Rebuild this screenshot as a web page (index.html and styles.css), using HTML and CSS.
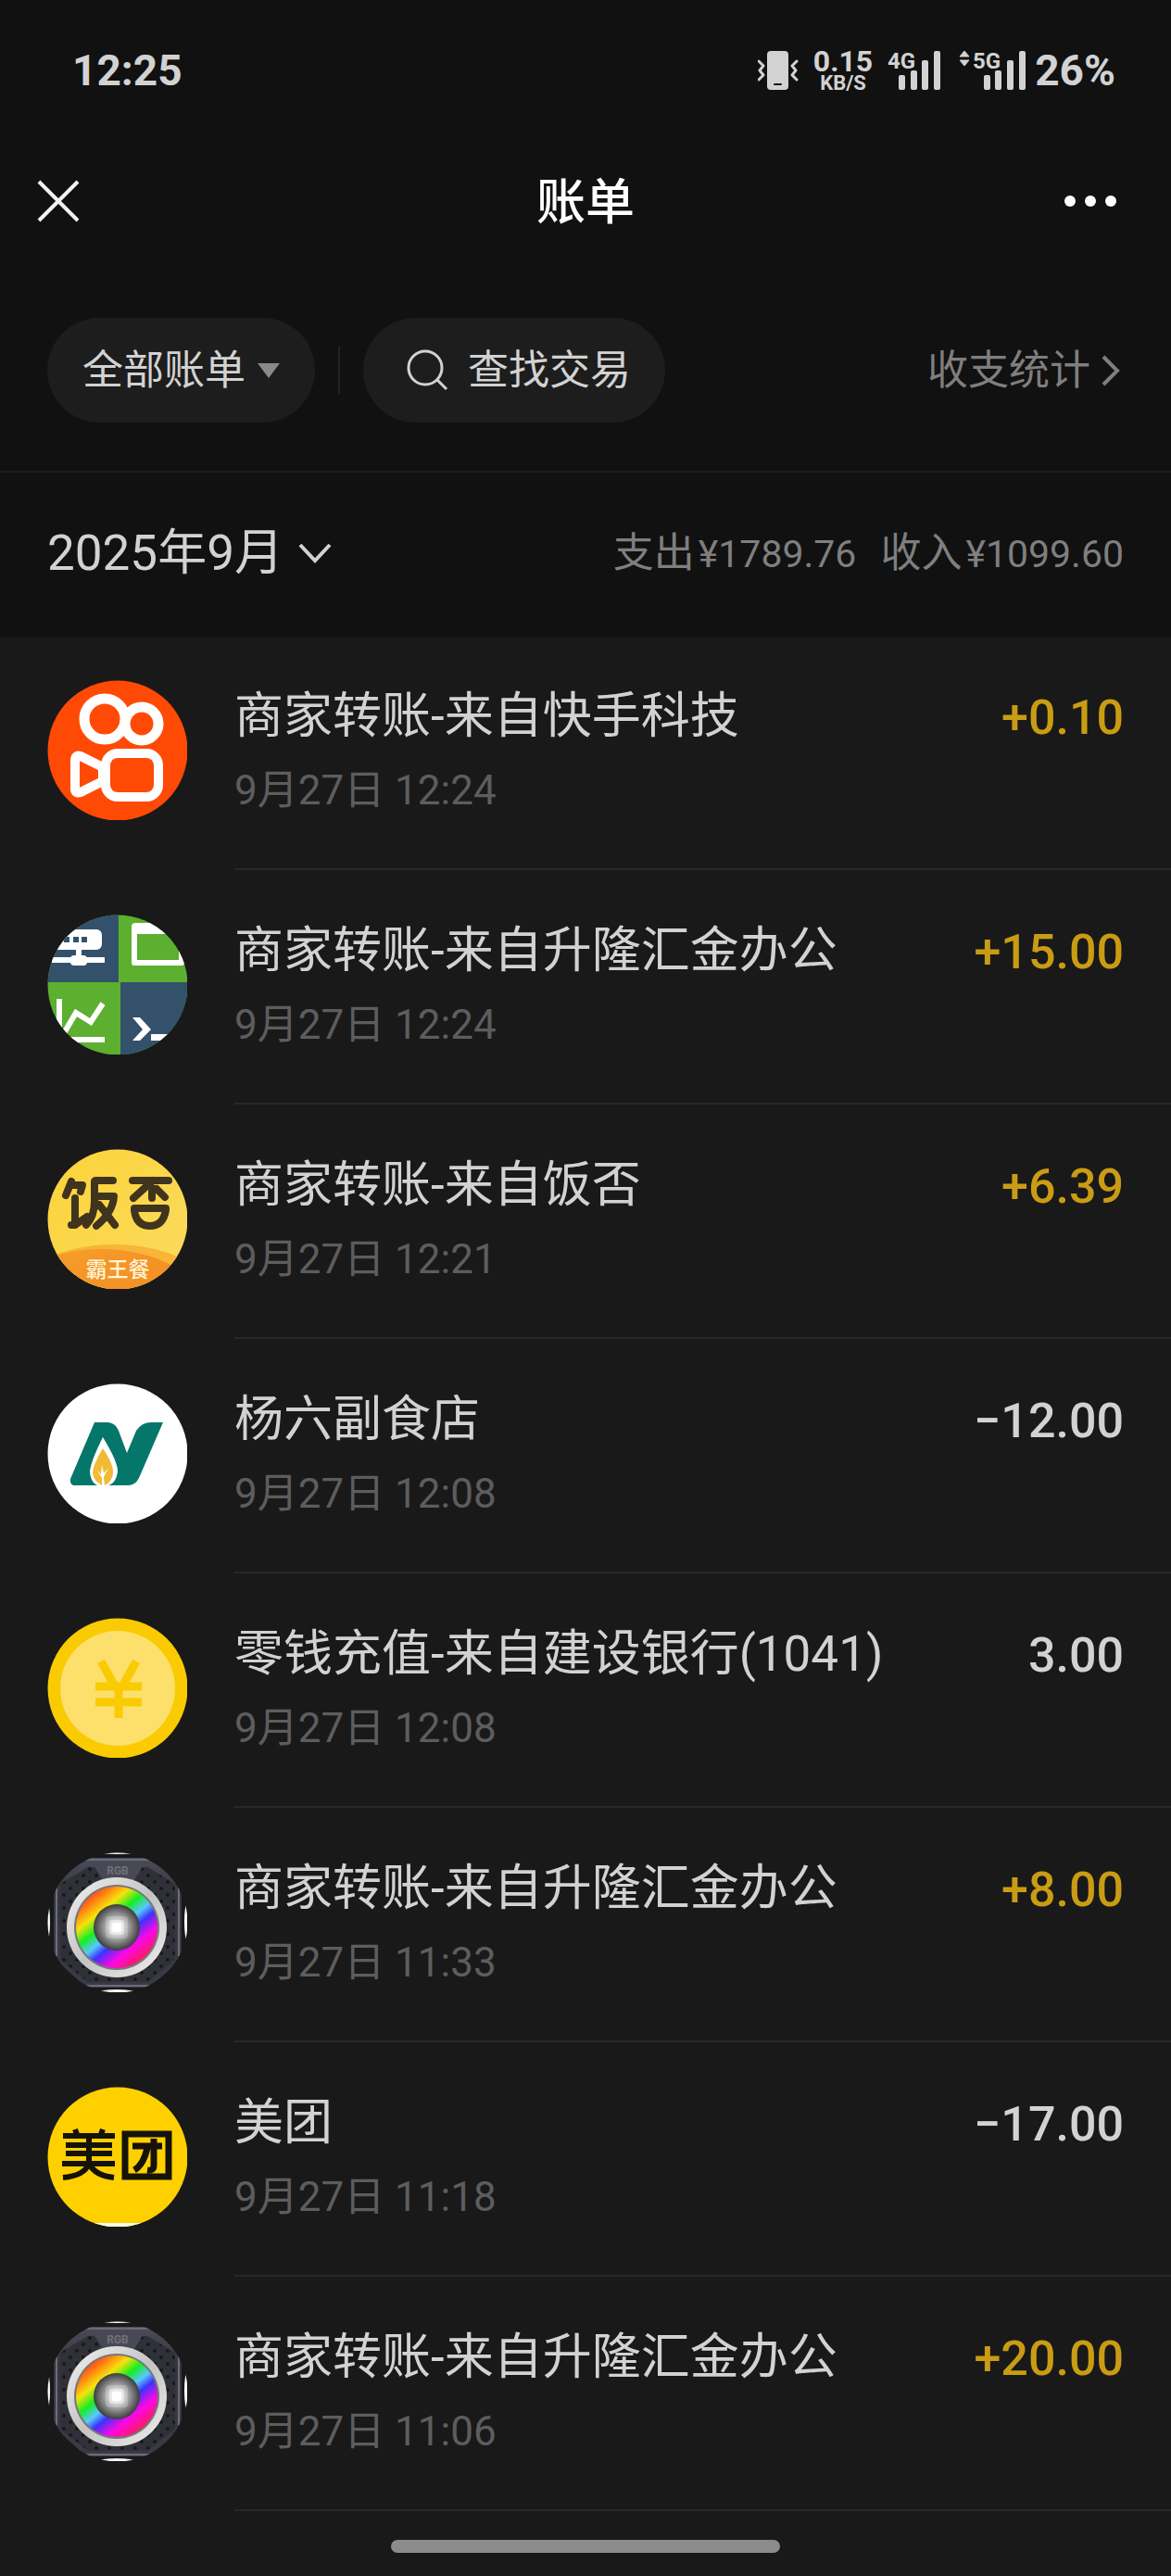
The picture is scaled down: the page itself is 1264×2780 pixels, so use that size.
FILE: index.html
```html
<!DOCTYPE html>
<html lang="zh-CN">
<head>
<meta charset="utf-8">
<meta name="viewport" content="width=device-width">
<title>账单</title>
<link rel="stylesheet" href="styles.css">
</head>
<body>
<svg class="defs" aria-hidden="true">
  <defs>
    <linearGradient id="orange" x1="0" y1="0" x2="1" y2="1"><stop offset="0" stop-color="#f8a22c"/><stop offset="1" stop-color="#ee7f1d"/></linearGradient>
    <linearGradient id="yellow" x1="0" y1="0" x2="1" y2="1"><stop offset="0" stop-color="#fbd338"/><stop offset="1" stop-color="#fbdb60"/></linearGradient>
    <linearGradient id="shell" x1="0" y1="0" x2="0" y2="1"><stop offset="0" stop-color="#4b4c58"/><stop offset=".3" stop-color="#34353c"/><stop offset="1" stop-color="#3a3b46"/></linearGradient>
    <linearGradient id="ring" x1="0" y1="0" x2="1" y2="1"><stop offset="0" stop-color="#f2f2f0"/><stop offset=".5" stop-color="#c4c4c2"/><stop offset="1" stop-color="#f0f0ee"/></linearGradient>
    <linearGradient id="rainbow" x1=".18" y1=".1" x2=".82" y2=".9">
      <stop offset="0" stop-color="#ff4a1c"/><stop offset=".1" stop-color="#ff8a10"/><stop offset=".23" stop-color="#f6e20c"/><stop offset=".38" stop-color="#16ee22"/><stop offset=".52" stop-color="#58c8ff"/><stop offset=".63" stop-color="#3c34fa"/><stop offset=".8" stop-color="#fb08e6"/><stop offset="1" stop-color="#fb1a5c"/>
    </linearGradient>
    <radialGradient id="core"><stop offset="0" stop-color="#fff"/><stop offset=".22" stop-color="#dedede"/><stop offset=".6" stop-color="#8f8f8f"/><stop offset="1" stop-color="#3c3c3c"/></radialGradient>
    <pattern id="holes" width="14" height="14" patternUnits="userSpaceOnUse"><circle cx="4" cy="4" r="2" fill="#17181c"/><circle cx="11" cy="11" r="2" fill="#17181c"/></pattern>
    <clipPath id="round"><circle cx="76" cy="76" r="75.500"/></clipPath>
    <symbol id="rgb" viewBox="0 0 151 151">
      <g clip-path="url(#round)">
        <rect width="151" height="151" fill="#191919"/>
        <ellipse cx="75" cy="0" rx="24" ry="2" fill="#fff"/><ellipse cx="75" cy="151" rx="20" ry="3" fill="#f4f4f4"/>
        <ellipse cx="0" cy="75" rx="3" ry="20" fill="#fff"/><ellipse cx="151" cy="75" rx="3" ry="20" fill="#fff"/>
        <path d="M40 6H112L145 34V116L110 146H42L7 114V34Z" fill="url(#shell)"/>
        <path d="M14 34L44 16H108L138 34V116L108 140H44L14 116Z" fill="#303138"/>
        <path d="M14 34L44 16H108L138 34V116L108 140H44L14 116Z" fill="url(#holes)"/>
        <path d="M40 8H112M42 144H110M10 36V112M142 36V112" stroke="#6b6c7c" stroke-width="2"/>
        <path d="M50 14H104L94 30H60Z" fill="#484954"/>
        <text x="76" y="24" text-anchor="middle" class="rgb-label">RGB</text>
      </g>
      <circle cx="75" cy="81" r="54" fill="url(#ring)"/>
      <circle cx="75" cy="81" r="46" fill="#77777a"/>
      <circle cx="75" cy="81" r="44" fill="url(#rainbow)"/>
      <circle cx="75" cy="81" r="25" fill="url(#core)"/>
      <rect x="63" y="69" width="24" height="24" rx="4" fill="#fff" opacity=".2"/>
      <rect x="67" y="73" width="16" height="16" rx="3" fill="#fff" opacity=".4"/>
      <rect x="70" y="76" width="10" height="10" rx="2" fill="#fff"/>
    </symbol>
  </defs>
</svg>

<header class="top">
  <div class="status">
    <time class="clock">12:25</time>
    <div class="status-icons">
      <svg class="vibrate" viewBox="0 0 44 44"><rect x="10" y="1" width="23" height="42" rx="4" fill="#d2d2d2"/><path d="M18 37H25" stroke="#111" stroke-width="2" stroke-linecap="round"/><path d="M1 12L6 17L2 22L6 27L1 32M42 12L37 17L41 22L37 27L42 32" fill="none" stroke="#d2d2d2" stroke-width="3" stroke-linecap="round" stroke-linejoin="round"/></svg>
      <div class="speed"><span class="rate">0.15</span><span class="unit">KB/S</span></div>
      <svg class="signal" viewBox="0 -8 58 60"><text x="0" y="20" class="net">4G</text><g fill="#d2d2d2"><rect x="12" y="27" width="7" height="16" rx="2"/><rect x="25" y="22" width="7" height="21" rx="2"/><rect x="37" y="11" width="7" height="32" rx="2"/><rect x="50" y="1" width="7" height="42" rx="2"/></g></svg>
      <svg class="signal wide" viewBox="0 -8 73 60"><path d="M7 1L12 7H2ZM7 17L12 11H2Z" fill="#d2d2d2" stroke="#d2d2d2" stroke-linejoin="round"/><text x="16" y="20" class="net">5G</text><g fill="#d2d2d2"><rect x="28" y="27" width="7" height="16" rx="2"/><rect x="40" y="22" width="7" height="21" rx="2"/><rect x="53" y="11" width="7" height="32" rx="2"/><rect x="66" y="1" width="7" height="42" rx="2"/></g></svg>
      <span class="battery">26%</span>
    </div>
  </div>

  <nav class="nav">
    <button class="icon-button" aria-label="关闭"><svg width="46" height="46" viewBox="0 0 46 46"><path d="M2 2L44 44M44 2L2 44" stroke="#f2f2f2" stroke-width="4"/></svg></button>
    <h1 class="title">账单</h1>
    <button class="icon-button more" aria-label="更多"><svg width="58" height="14" viewBox="0 0 58 14"><g fill="#fff"><circle cx="7" cy="7" r="6"/><circle cx="29" cy="7" r="6"/><circle cx="51" cy="7" r="6"/></g></svg></button>
  </nav>

  <div class="filters">
    <button class="pill pill-type">全部账单<svg width="24" height="16" viewBox="0 0 24 16"><path d="M0 0H24L12 16Z" fill="#8a8a8a"/></svg></button>
    <span class="separator"></span>
    <button class="pill pill-search"><svg width="45" height="45" viewBox="0 0 45 45"><g fill="none" stroke="#d2d2d2" stroke-width="3"><circle cx="20" cy="20" r="18"/><path d="M32 32L43 43"/></g></svg>查找交易</button>
    <a class="stats" href="#">收支统计<svg width="20" height="34" viewBox="0 0 20 34"><path d="M2 2L17 17L2 32" fill="none" stroke="#7f7f7f" stroke-width="4"/></svg></a>
  </div>
</header>

<section class="month">
  <button class="month-picker">2025年9月<svg width="36" height="22" viewBox="0 0 36 22"><path d="M2 2L18 19L34 2" fill="none" stroke="#d2d2d2" stroke-width="4"/></svg></button>
  <div class="totals"><span>支出<b>¥1789.76</b></span><span>收入<b>¥1099.60</b></span></div>
</section>

<ul class="bills">
  <li class="bill">
    <svg class="avatar" viewBox="0 0 151 151"><circle cx="76" cy="76" r="75.500" fill="#ff4a06"/><g fill="none" stroke="#fff"><circle cx="62" cy="42" r="22" stroke-width="11"/><circle cx="102" cy="47" r="18" stroke-width="11"/><rect x="63" y="79" width="57" height="47" rx="13" stroke-width="10"/><path d="M60 94L36 82Q30 80 30 87V117Q30 123 36 121L60 109Z" stroke-width="10" stroke-linejoin="round"/></g></svg>
    <div class="detail"><div class="info"><h2>商家转账-来自快手科技</h2><time>9月27日 12:24</time></div><strong class="income">+0.10</strong></div>
  </li>
  <li class="bill">
    <svg class="avatar" viewBox="0 0 151 151"><g clip-path="url(#round)"><rect width="151" height="151" fill="#5caf2f"/><path d="M0 0H77V73H0ZM79 73H151V151H79Z" fill="#34516b"/>
      <rect x="0" y="16" width="59" height="22" rx="6" fill="#fff"/><path d="M18 24h6v6h-6zM28 24h6v6h-6zM37 24h6v6h-6z" fill="#34516b"/><path d="M5 49H62M34 38V49" stroke="#fff" stroke-width="6"/><rect x="25" y="44" width="18" height="11" rx="4" fill="#fff"/>
      <path d="M94 12V52H145V12" fill="none" stroke="#fff" stroke-width="6" stroke-linejoin="round"/><rect x="91" y="9" width="57" height="12" rx="4" fill="#fff"/>
      <path d="M13 91V135H62M18 128L31 106L47 116L60 96" fill="none" stroke="#fff" stroke-width="6"/>
      <path d="M92 111H100L112 124L100 136H92L103 124ZM112 129H140V136H112Z" fill="#fff"/></g></svg>
    <div class="detail"><div class="info"><h2>商家转账-来自升隆汇金办公</h2><time>9月27日 12:24</time></div><strong class="income">+15.00</strong></div>
  </li>
  <li class="bill">
    <svg class="avatar" viewBox="0 0 151 151"><g clip-path="url(#round)"><rect width="151" height="151" fill="url(#yellow)"/><ellipse cx="72" cy="166" rx="112" ry="63" fill="#f8b537"/><ellipse cx="58" cy="174" rx="112" ry="66" fill="url(#orange)"/>
      <g fill="none" stroke="#40341c" stroke-width="8" stroke-linecap="round" stroke-linejoin="round"><path d="M26 35L20 50M26 39H38L36 46M30 53V82L43 73M26 82H30M52 34H71M51 35V56Q51 73 42 82M53 51H72Q71 68 53 83M56 60L73 82M92 34H131M114 34L93 53M113 42V53M118 43L127 52M94 64H128V66Q125 83 111 83Q96 83 94 66Z"/></g>
      <text x="76" y="138" text-anchor="middle" class="meal-label">霸王餐</text></g></svg>
    <div class="detail"><div class="info"><h2>商家转账-来自饭否</h2><time>9月27日 12:21</time></div><strong class="income">+6.39</strong></div>
  </li>
  <li class="bill">
    <svg class="avatar" viewBox="0 0 151 151"><circle cx="76" cy="76" r="75.500" fill="#fff"/><path d="M51 42H66Q74 43 77 51L86 75L96 51Q102 42 112 42H125L99 102Q95 110 87 110H28Q24 108 25 103Z" fill="#04776a"/><path d="M60 58Q76 84 76 95Q74 111 60 111Q47 111 46 95Q47 84 60 58Z" fill="#fff"/><path d="M60 70Q72 88 71 97Q70 106 62 110L61 101L66 91L61 97L59 88L58 98L54 94L59 102V110Q50 105 49 97Q49 88 60 70Z" fill="#f1bb34"/></svg>
    <div class="detail"><div class="info"><h2>杨六副食店</h2><time>9月27日 12:08</time></div><strong>−12.00</strong></div>
  </li>
  <li class="bill">
    <svg class="avatar" viewBox="0 0 151 151"><circle cx="76" cy="76" r="75.500" fill="#facb03"/><circle cx="76" cy="76" r="62" fill="#fde06b"/><path d="M58 47L73 74M96 47L81 74M52 74H102M52 91H102M77 72V108" fill="none" stroke="#facb03" stroke-width="9"/></svg>
    <div class="detail"><div class="info"><h2>零钱充值-来自建设银行(1041)</h2><time>9月27日 12:08</time></div><strong>3.00</strong></div>
  </li>
  <li class="bill">
    <svg class="avatar"><use href="#rgb"/></svg>
    <div class="detail"><div class="info"><h2>商家转账-来自升隆汇金办公</h2><time>9月27日 11:33</time></div><strong class="income">+8.00</strong></div>
  </li>
  <li class="bill">
    <svg class="avatar" viewBox="0 0 151 151"><g clip-path="url(#round)"><rect width="151" height="151" fill="#ffd000"/><rect y="147" width="151" height="4" fill="#fffbe0"/><g fill="none" stroke="#15120a" stroke-width="6"><path d="M30 46L33 54M60 46L57 54M17 53H73M20 63H70M20 72H70M16 83H73M45 53V83M45 83Q40 96 17 98M45 83Q52 96 72 98"/><rect x="84" y="51" width="47" height="46" stroke-width="7"/><path d="M92 64H124M115 56V85Q115 91 108 90M108 66Q104 84 94 90" stroke-width="7"/></g></g></svg>
    <div class="detail"><div class="info"><h2>美团</h2><time>9月27日 11:18</time></div><strong>−17.00</strong></div>
  </li>
  <li class="bill">
    <svg class="avatar"><use href="#rgb"/></svg>
    <div class="detail"><div class="info"><h2>商家转账-来自升隆汇金办公</h2><time>9月27日 11:06</time></div><strong class="income">+20.00</strong></div>
  </li>
</ul>
<footer class="home"><span class="home-bar"></span></footer>
</body>
</html>
```
FILE: styles.css
```css
* { box-sizing: border-box; }

body {
  margin: 0;
  background: #191919;
  color: #d2d2d2;
  font-family: Roboto, "Noto Sans CJK SC", sans-serif;
  font-size: 44px;
  line-height: 60px;
}

button {
  display: flex;
  align-items: center;
  padding: 0;
  border: 0;
  background: none;
  color: inherit;
  font: inherit;
}

svg { display: block; flex: none; }
h1, h2, ul { margin: 0; padding: 0; }
.defs { position: absolute; width: 0; height: 0; }

.top {
  background: #111;
  border-bottom: 2px solid #1d1d1d;
}

/* Status bar */
.status {
  display: flex;
  justify-content: space-between;
  align-items: center;
  height: 152px;
  padding: 0 60px 0 78px;
  font-weight: 700;
}
.clock, .battery { font-size: 46px; }
.status-icons { display: flex; align-items: center; }
.vibrate { width: 44px; height: 44px; margin-right: 16px; }
.speed {
  display: flex;
  flex-direction: column;
  align-items: center;
  margin-right: 16px;
}
.rate { font-size: 32px; line-height: 28px; }
.unit { font-size: 22px; line-height: 20px; }
.signal { width: 58px; height: 60px; margin-right: 18px; }
.signal.wide { width: 73px; margin-right: 10px; }
.net { font-size: 24px; font-weight: 700; fill: #d2d2d2; }

/* Title bar */
.nav {
  display: grid;
  grid-template-columns: 1fr auto 1fr;
  align-items: center;
  height: 130px;
  padding: 0 40px;
}
.more { justify-self: end; margin-right: 18px; }
.title { padding-top: 4px; color: #fff; font-size: 53px; font-weight: 500; }

/* Filters */
.filters {
  display: flex;
  align-items: center;
  padding: 61px 55px 52px 51px;
}
.pill {
  height: 113px;
  border-radius: 57px;
  background: #1d1d1d;
}
.pill-type { gap: 13px; padding: 0 38px; }
.pill-search { gap: 21px; padding: 0 37px 0 47px; }
.separator { width: 2px; height: 51px; margin: 0 25px; background: #232323; }
.stats {
  display: flex;
  align-items: center;
  gap: 12px;
  margin-left: auto;
  color: #7f7f7f;
  text-decoration: none;
}

/* Month summary */
.month {
  display: flex;
  justify-content: space-between;
  align-items: center;
  height: 178px;
  padding: 0 51px 4px;
  background: #111;
}
.month-picker { gap: 16px; font-size: 53px; }
.totals { display: flex; gap: 26px; color: #7f7f7f; }
.totals b { margin-left: 4px; font-size: 41px; font-weight: 400; }

/* Bills */
.bills { list-style: none; }
.bill { display: flex; padding-left: 51px; }
.avatar { width: 151px; height: 151px; margin: 48px 51px 0 0; }
.detail {
  display: flex;
  flex: 1;
  justify-content: space-between;
  align-items: flex-start;
  height: 253px;
  padding: 49px 51px 0 0;
  border-bottom: 2px solid #282828;
}
.bill:first-child .avatar { margin-top: 46px; }
.bill:first-child .detail { height: 251px; padding-top: 47px; }
.bill h2 { font-size: 53px; font-weight: 400; line-height: 76px; }
.info time { display: block; margin-top: 12px; color: #5d5d5d; line-height: 60px; }
.bill strong { font-size: 52px; font-weight: 500; line-height: 80px; }
.bill .income { color: #c99c14; }

.rgb-label { font-size: 12px; font-weight: 700; fill: #6f707c; }
.meal-label { font-size: 23px; font-weight: 500; fill: #fff3d6; }

/* Home indicator */
.home { display: flex; justify-content: center; padding: 31px 0 25px; }
.home-bar { width: 420px; height: 14px; border-radius: 7px; background: #8c8c8c; }
```
